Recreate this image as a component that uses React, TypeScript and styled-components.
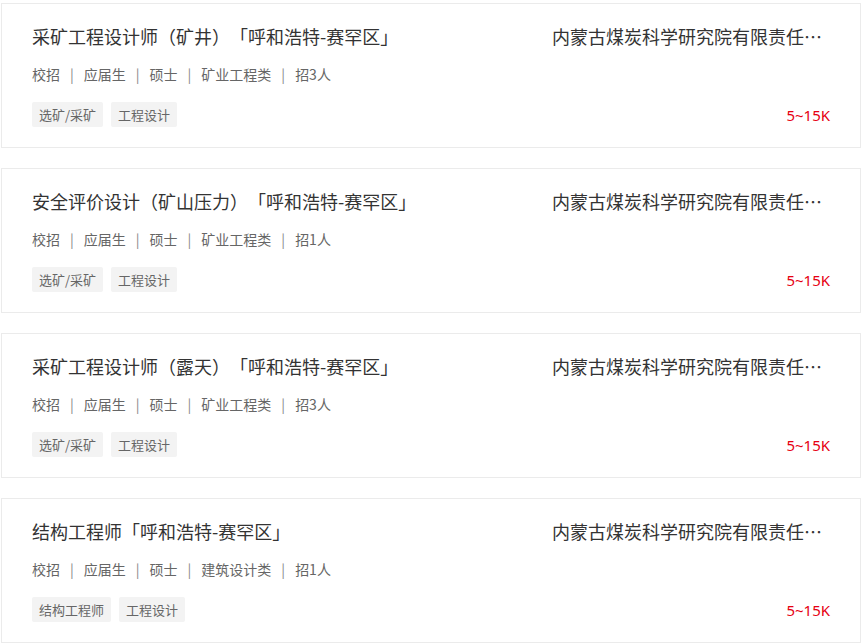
import React from "react";
import styled, { createGlobalStyle } from "styled-components";

type Job = {
  title: string;
  meta: string[];
  tags: string[];
  company: string;
  salary: string;
};

const jobs: Job[] = [
  {
    title: "采矿工程设计师（矿井）「呼和浩特-赛罕区」",
    meta: ["校招", "应届生", "硕士", "矿业工程类", "招3人"],
    tags: ["选矿/采矿", "工程设计"],
    company: "内蒙古煤炭科学研究院有限责任公司",
    salary: "5~15K",
  },
  {
    title: "安全评价设计（矿山压力）「呼和浩特-赛罕区」",
    meta: ["校招", "应届生", "硕士", "矿业工程类", "招1人"],
    tags: ["选矿/采矿", "工程设计"],
    company: "内蒙古煤炭科学研究院有限责任公司",
    salary: "5~15K",
  },
  {
    title: "采矿工程设计师（露天）「呼和浩特-赛罕区」",
    meta: ["校招", "应届生", "硕士", "矿业工程类", "招3人"],
    tags: ["选矿/采矿", "工程设计"],
    company: "内蒙古煤炭科学研究院有限责任公司",
    salary: "5~15K",
  },
  {
    title: "结构工程师「呼和浩特-赛罕区」",
    meta: ["校招", "应届生", "硕士", "建筑设计类", "招1人"],
    tags: ["结构工程师", "工程设计"],
    company: "内蒙古煤炭科学研究院有限责任公司",
    salary: "5~15K",
  },
];

function App() {
  return (
    <>
      <GlobalStyle />
      <JobList>
        {jobs.map((job, i) => (
          <JobCard key={i}>
            <MainCol>
              <Title>{job.title}</Title>
              <Meta>
                {job.meta.map((m, j) => (
                  <React.Fragment key={m + j}>
                    {j > 0 && <Sep>|</Sep>}
                    <span>{m}</span>
                  </React.Fragment>
                ))}
              </Meta>
              <Tags>
                {job.tags.map(t => (
                  <Tag key={t}>{t}</Tag>
                ))}
              </Tags>
            </MainCol>
            <SideCol>
              <Company>{job.company}</Company>
              <Salary>{job.salary}</Salary>
            </SideCol>
          </JobCard>
        ))}
      </JobList>
    </>
  );
}

const GlobalStyle = createGlobalStyle`
  body {
    margin: 0;
    background: #fff;
    font-family: "Noto Sans CJK SC", "Noto Sans", sans-serif;
    text-spacing-trim: space-all;
  }
`;

const JobList = styled.div`
  display: flex;
  flex-direction: column;
  gap: 20px;
  width: 860px;
  padding: 3px 0 0 1px;
`;

const JobCard = styled.div`
  display: flex;
  box-sizing: border-box;
  height: 145px;
  border: 1px solid #ebebeb;
  background: #fff;
  padding: 20px 30px 19px 30px;
`;

const MainCol = styled.div`
  flex: 1;
  display: flex;
  flex-direction: column;
  min-width: 0;
`;

const Title = styled.div`
  font-size: 18px;
  line-height: 24px;
  color: #333;
  white-space: nowrap;
`;

const Meta = styled.div`
  display: flex;
  align-items: center;
  margin-top: 16px;
  font-size: 14px;
  line-height: 20px;
  color: #666;
`;

const Sep = styled.span`
  margin: 0 10px;
  color: #888;
`;

const Tags = styled.div`
  display: flex;
  gap: 8px;
  margin-top: 18px;
`;

const Tag = styled.span`
  height: 25px;
  line-height: 25px;
  padding: 0 7px;
  font-size: 13px;
  color: #666;
  background: #f3f3f3;
  border-radius: 2px;
`;

const SideCol = styled.div`
  width: 278px;
  display: flex;
  flex-direction: column;
  justify-content: space-between;
`;

const Company = styled.div`
  font-size: 18px;
  line-height: 24px;
  color: #333;
  white-space: nowrap;
  overflow: hidden;
  text-overflow: ellipsis;
`;

const Salary = styled.div`
  align-self: flex-end;
  font-family: "Noto Sans", "Noto Sans CJK SC", sans-serif;
  font-size: 15px;
  line-height: 25px;
  color: #e60012;
`;

export default App;
